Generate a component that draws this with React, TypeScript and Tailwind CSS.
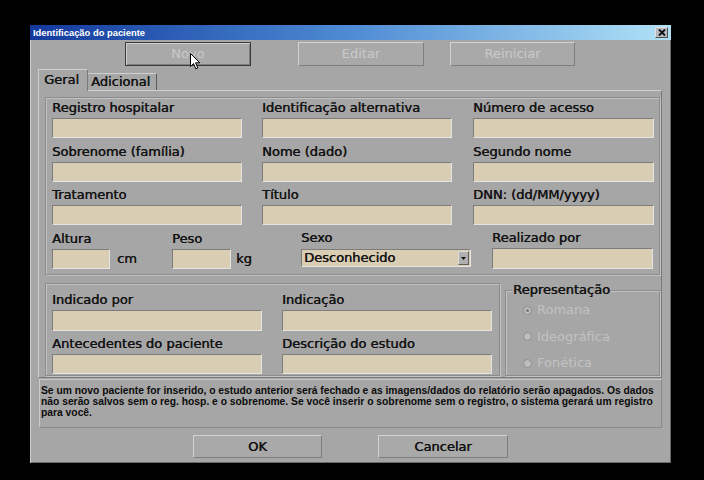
import React from "react";

const inputCls =
  "bg-[#d9cdb3] border-t border-l border-t-[#7c7c7c] border-l-[#7c7c7c] border-b border-r border-b-[#e4e4e4] border-r-[#e4e4e4]";

const lbl = "text-[13px] text-[#141414] [text-shadow:0.45px_0_0_#141414]";

function Field({ label, w, h = 20 }: { label: string; w: string; h?: number }) {
  return (
    <div className={`flex flex-col ${w}`}>
      <div className={`h-[15px] leading-[15px] whitespace-nowrap ${lbl}`}>{label}</div>
      <div className={`mt-[3px] ${h === 21 ? "h-[21px]" : "h-[20px]"} ${inputCls}`} />
    </div>
  );
}

function Btn({
  children,
  w,
  h = "h-[24px]",
  disabled,
  focused,
}: {
  children: React.ReactNode;
  w: string;
  h?: string;
  disabled?: boolean;
  focused?: boolean;
}) {
  return (
    <div
      className={`${w} ${h} flex items-center justify-center text-[13px] bg-[#a9a9a9] ${
        focused
          ? "border border-[#3a3a3a] shadow-[inset_1px_1px_0_#cfcfcf,inset_-1px_-1px_0_#7e7e7e]"
          : "border-t border-l border-t-[#d2d2d2] border-l-[#d2d2d2] border-b border-r border-b-[#7e7e7e] border-r-[#7e7e7e]"
      } ${disabled ? "text-[#c9c9c9]" : "text-[#111] [text-shadow:0.45px_0_0_#111]"}`}
    >
      {children}
    </div>
  );
}

function Radio({ label, checked }: { label: string; checked?: boolean }) {
  return (
    <div className="flex items-center h-[16px]">
      <div className="w-[9px] h-[9px] rounded-full bg-[#bdbdbd] border border-[#8f8f8f] flex items-center justify-center">
        {checked && <div className="w-[3px] h-[3px] rounded-full bg-[#7a7a7a]" />}
      </div>
      <span className="ml-[5px] text-[13px] text-[#c2c2c2] leading-[16px]">{label}</span>
    </div>
  );
}

const etched =
  "border border-[#8c8c8c] shadow-[inset_1px_1px_0_#c2c2c2,1px_1px_0_#c2c2c2]";

export default function App() {
  return (
    <div className="w-[704px] h-[480px] bg-black pt-[25px] pl-[30px] relative overflow-hidden font-['DejaVu_Sans',sans-serif]">
      <div className="w-[641px] h-[438px] bg-[#a6a6a6] flex flex-col shadow-[inset_1px_0_0_#cfcfcf,inset_-1px_-1px_0_#6a6a6a]">
        {/* Title bar */}
        <div className="h-[15px] flex items-center justify-between pl-[3px] pr-[3px] bg-linear-to-r from-[#14389c] via-[#4f8bd3] to-[#b0e2f6]">
          <span className="text-white font-bold text-[9.4px] leading-[15px] font-['Liberation_Sans',sans-serif] whitespace-nowrap">
            Identificação do paciente
          </span>
          <div className="w-[13px] h-[11px] bg-[#b4b9bd] border-t border-l border-t-[#e0e0e0] border-l-[#e0e0e0] border-b border-r border-b-[#505050] border-r-[#505050] flex items-center justify-center">
            <svg width="8" height="7" viewBox="0 0 8 7">
              <path d="M1 0.5 L7 6.5 M7 0.5 L1 6.5" stroke="#111" strokeWidth="1.8" />
            </svg>
          </div>
        </div>

        {/* Top buttons */}
        <div className="mt-[2px] h-[24px] flex pl-[95px]">
          <Btn w="w-[126px]" disabled focused>
            Novo
          </Btn>
          <div className="ml-[47px]">
            <Btn w="w-[126px]" disabled>
              Editar
            </Btn>
          </div>
          <div className="ml-[26px]">
            <Btn w="w-[125px]" disabled>
              Reiniciar
            </Btn>
          </div>
        </div>

        {/* Tabs */}
        <div className="mt-[3px] h-[21px] flex items-end pl-[8px] relative z-10">
          <div className={`w-[50px] h-[22px] mb-[-1px] bg-[#a6a6a6] border-t border-l border-t-[#d0d0d0] border-l-[#d0d0d0] border-r border-r-[#7a7a7a] pl-[5px] pt-[2px] leading-[16px] ${lbl}`}>
            Geral
          </div>
          <div className={`w-[69px] h-[17px] bg-[#a6a6a6] border-t border-t-[#d0d0d0] border-r border-r-[#5a5a5a] pl-[3px] leading-[16px] ${lbl}`}>
            Adicional
          </div>
        </div>

        {/* Tab panel */}
        <div className="ml-[8px] w-[624px] h-[288px] border-t border-l border-t-[#d0d0d0] border-l-[#d0d0d0] border-b border-r border-b-[#7a7a7a] border-r-[#7a7a7a] pt-[6px] pl-[6px]">
          {/* Group 1 */}
          <div className={`w-[615px] h-[178px] ${etched} pl-[6px] pt-[2px] flex flex-col`}>
            <div className="flex">
              <Field label="Registro hospitalar" w="w-[190px]" />
              <div className="ml-[20px]">
                <Field label="Identificação alternativa" w="w-[190px]" />
              </div>
              <div className="ml-[21px]">
                <Field label="Número de acesso" w="w-[181px]" />
              </div>
            </div>
            <div className="flex mt-[6px]">
              <Field label="Sobrenome (família)" w="w-[190px]" />
              <div className="ml-[20px]">
                <Field label="Nome (dado)" w="w-[190px]" />
              </div>
              <div className="ml-[21px]">
                <Field label="Segundo nome" w="w-[181px]" />
              </div>
            </div>
            <div className="flex mt-[5px]">
              <Field label="Tratamento" w="w-[190px]" />
              <div className="ml-[20px]">
                <Field label="Título" w="w-[190px]" />
              </div>
              <div className="ml-[21px]">
                <Field label="DNN: (dd/MM/yyyy)" w="w-[181px]" />
              </div>
            </div>
            <div className="flex mt-[5px]">
              <div className="w-[120px] flex items-end">
                <Field label="Altura" w="w-[58px]" />
                <span className={`ml-[7px] h-[20px] leading-[20px] ${lbl}`}>cm</span>
              </div>
              <div className="w-[129px] flex items-end">
                <Field label="Peso" w="w-[59px]" />
                <span className={`ml-[5px] h-[20px] leading-[20px] ${lbl}`}>kg</span>
              </div>
              <div className="w-[191px] flex flex-col">
                <div className={`h-[15px] leading-[15px] ${lbl}`}>Sexo</div>
                <div className="mt-[4px] w-[170px] h-[18px] bg-[#d9cdb3] border-t border-l border-t-[#7c7c7c] border-l-[#7c7c7c] border-b border-r border-b-[#e4e4e4] border-r-[#e4e4e4] flex items-center justify-between pl-[2px] pr-[1px]">
                  <span className={`leading-[16px] ${lbl}`}>Desconhecido</span>
                  <div className="w-[11px] h-[14px] bg-[#b0b0b0] border-t border-l border-t-[#dcdcdc] border-l-[#dcdcdc] border-b border-r border-b-[#5e5e5e] border-r-[#5e5e5e] flex items-center justify-center">
                    <svg width="5" height="3" viewBox="0 0 5 3">
                      <path d="M0 0 L5 0 L2.5 3 Z" fill="#111" />
                    </svg>
                  </div>
                </div>
              </div>
              <div className="flex flex-col">
                <div className={`h-[15px] leading-[15px] whitespace-nowrap ${lbl}`}>Realizado por</div>
                <div className={`mt-[3px] w-[161px] h-[21px] ${inputCls}`} />
              </div>
            </div>
          </div>

          {/* Lower row */}
          <div className="flex mt-[8px]">
            <div className={`w-[455px] h-[93px] ${etched} pl-[6px] pt-[8px] flex flex-col`}>
              <div className="flex">
                <Field label="Indicado por" w="w-[210px]" h={21} />
                <div className="ml-[20px]">
                  <Field label="Indicação" w="w-[210px]" h={21} />
                </div>
              </div>
              <div className="flex mt-[5px]">
                <Field label="Antecedentes do paciente" w="w-[210px]" />
                <div className="ml-[20px]">
                  <Field label="Descrição do estudo" w="w-[210px]" />
                </div>
              </div>
            </div>
            <div className={`ml-[5px] mt-[7px] w-[155px] h-[86px] ${etched} relative`}>
              <div className={`absolute left-[6px] top-[-9px] bg-[#a6a6a6] px-[1px] h-[16px] leading-[16px] ${lbl}`}>
                Representação
              </div>
              <div className="flex flex-col pl-[17px] pt-[11px] gap-[10.5px]">
                <Radio label="Romana" checked />
                <Radio label="Ideográfica" />
                <Radio label="Fonética" />
              </div>
            </div>
          </div>
        </div>

        {/* Info box */}
        <div className="mt-[1px] ml-[9px] w-[623px] h-[49px] border-t border-l border-t-[#cacaca] border-l-[#cacaca] border-b border-r border-b-[#8a8a8a] border-r-[#8a8a8a] pt-[5px] pl-[1px] font-['Liberation_Sans',sans-serif] font-bold text-[10.3px] leading-[11px] text-[#0c0c0c] whitespace-nowrap">
          <div>
            Se um novo paciente for inserido, o estudo anterior será fechado e as imagens/dados do relatório serão apagados. Os dados
          </div>
          <div>
            não serão salvos sem o reg. hosp. e o sobrenome. Se você inserir o sobrenome sem o registro, o sistema gerará um registro
          </div>
          <div>para você.</div>
        </div>

        {/* Bottom buttons */}
        <div className="mt-[7px] flex pl-[163px]">
          <Btn w="w-[129px]" h="h-[23px]">
            OK
          </Btn>
          <div className="ml-[56px]">
            <Btn w="w-[130px]" h="h-[23px]">
              Cancelar
            </Btn>
          </div>
        </div>
      </div>

      {/* Mouse cursor */}
      <svg className="absolute left-[190px] top-[53px]" width="11" height="17" viewBox="0 0 11 17">
        <path
          d="M0.5 0.5 L0.5 13.5 L3.5 10.5 L5.8 15.8 L7.8 15 L5.6 9.8 L9.8 9.8 Z"
          fill="#ffffff"
          stroke="#000000"
          strokeWidth="1"
          strokeLinejoin="miter"
        />
      </svg>
    </div>
  );
}
